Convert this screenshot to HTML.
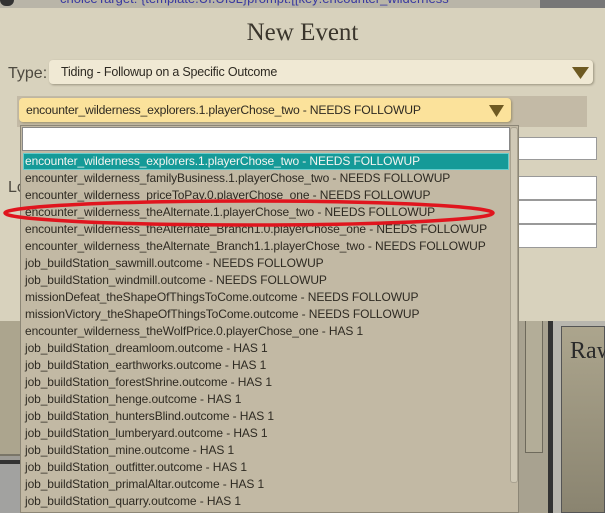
<!DOCTYPE html>
<html><head><style>
*{margin:0;padding:0;box-sizing:border-box}
body{width:605px;height:513px;overflow:hidden;position:relative;background:#9e9c96;font-family:"Liberation Sans",sans-serif}
.a{position:absolute}
.row{position:absolute;left:25px;font-size:12px;color:#2e2a22;white-space:nowrap;letter-spacing:-0.1px;height:17px;line-height:17px}
</style></head><body>
<div class="a" style="left:0;top:0;width:605px;height:8px;background:#b9b5a8"></div>
<div class="a" style="left:0;top:-9px;font-size:13px;color:#3a3aa0;left:60px;white-space:nowrap">choiceTarget: {template.UI.UI3L}prompt:[[key:encounter_wilderness</div>
<div class="a" style="left:540px;top:0;width:65px;height:8px;background:#777"></div>
<div class="a" style="left:0;top:0;width:14px;height:6px;background:#333;border-radius:0 0 6px 6px"></div>
<div class="a" style="left:0;top:321px;width:20px;height:135px;background:#aca58e;border-bottom:2px solid #7a7668"></div>
<div class="a" style="left:0;top:460px;width:20px;height:4px;background:#333"></div>
<div class="a" style="left:0;top:464px;width:20px;height:49px;background:#a2a2a0"></div>
<div class="a" style="left:518px;top:321px;width:32px;height:192px;background:#a8a290"></div>
<div class="a" style="left:525px;top:321px;width:18px;height:132px;border:1px solid #6e6a5c;border-top:none;background:#b3ad98"></div>
<div class="a" style="left:548px;top:321px;width:5px;height:192px;background:#333"></div>
<div class="a" style="left:553px;top:321px;width:52px;height:192px;background:#b8b6ae"></div>
<div class="a" style="left:561px;top:326px;width:44px;height:187px;background:linear-gradient(#aca58d,#8a8470);border:1px solid #555"></div>
<div class="a" style="left:570px;top:338px;font-family:'Liberation Serif',serif;font-size:24px;color:#2a2a2a">Raw</div>
<div class="a" style="left:0;top:8px;width:605px;height:313px;background:#d8d2bd"></div>
<div class="a" style="left:0;top:19px;width:605px;text-align:center;font-family:'Liberation Serif',serif;font-size:25px;color:#3a352c">New Event</div>
<div class="a" style="left:8px;top:65px;font-size:16px;color:#4e4a40">Type:</div>
<div class="a" style="left:49px;top:60px;width:544px;height:24px;background:#f0e9d4;border-radius:4px;box-shadow:1px 1px 2px #9a947f"></div>
<div class="a" style="left:61px;top:65px;font-size:12.5px;color:#2e2a22;letter-spacing:-0.2px">Tiding - Followup on a Specific Outcome</div>
<svg class="a" style="left:572px;top:66px" width="17" height="13"><path d="M0 1H17L8.5 13Z" fill="#6e5a22"/></svg>
<div class="a" style="left:8px;top:179px;font-size:16px;color:#4e4a40">Lo</div>
<div class="a" style="left:17px;top:96px;width:570px;height:31px;background:#c3baa6"></div>
<div class="a" style="left:19px;top:98px;width:492px;height:24px;background:#fbe29b;border-radius:4px;box-shadow:1px 1px 2px #9a8f6c"></div>
<div class="a" style="left:26px;top:103px;font-size:12.2px;color:#2e2a22;letter-spacing:-0.2px">encounter_wilderness_explorers.1.playerChose_two - NEEDS FOLLOWUP</div>
<svg class="a" style="left:489px;top:105px" width="15" height="12"><path d="M0 0H15L7.5 12Z" fill="#6e5a22"/></svg>
<div class="a" style="left:518px;top:137px;width:79px;height:23px;background:#fff;border:1px solid #999"></div>
<div class="a" style="left:518px;top:176px;width:79px;height:24px;background:#fff;border:1px solid #999"></div>
<div class="a" style="left:518px;top:200px;width:79px;height:24px;background:#fff;border:1px solid #999"></div>
<div class="a" style="left:518px;top:224px;width:79px;height:24px;background:#fff;border:1px solid #999"></div>
<div class="a" style="left:20px;top:125px;width:499px;height:388px;background:#c2b9a4;border:1px solid #8c8676"></div>
<div class="a" style="left:22px;top:127px;width:488px;height:24px;background:#fff;border:1px solid #888"></div>
<div class="a" style="left:510px;top:127px;width:8px;height:356px;background:#d0c9b6;border:1px solid #a9a290;border-radius:3px"></div>
<div class="a" style="left:23px;top:153px;width:486px;height:17px;background:#159a98;border:1px solid #6cc"></div>
<div class="row" style="top:153px;color:#f4f4f0">encounter_wilderness_explorers.1.playerChose_two - NEEDS FOLLOWUP</div>
<div class="row" style="top:170px">encounter_wilderness_familyBusiness.1.playerChose_two - NEEDS FOLLOWUP</div>
<div class="row" style="top:187px">encounter_wilderness_priceToPay.0.playerChose_one - NEEDS FOLLOWUP</div>
<div class="row" style="top:204px">encounter_wilderness_theAlternate.1.playerChose_two - NEEDS FOLLOWUP</div>
<div class="row" style="top:221px">encounter_wilderness_theAlternate_Branch1.0.playerChose_one - NEEDS FOLLOWUP</div>
<div class="row" style="top:238px">encounter_wilderness_theAlternate_Branch1.1.playerChose_two - NEEDS FOLLOWUP</div>
<div class="row" style="top:255px">job_buildStation_sawmill.outcome - NEEDS FOLLOWUP</div>
<div class="row" style="top:272px">job_buildStation_windmill.outcome - NEEDS FOLLOWUP</div>
<div class="row" style="top:289px">missionDefeat_theShapeOfThingsToCome.outcome - NEEDS FOLLOWUP</div>
<div class="row" style="top:306px">missionVictory_theShapeOfThingsToCome.outcome - NEEDS FOLLOWUP</div>
<div class="row" style="top:323px">encounter_wilderness_theWolfPrice.0.playerChose_one - HAS 1</div>
<div class="row" style="top:340px">job_buildStation_dreamloom.outcome - HAS 1</div>
<div class="row" style="top:357px">job_buildStation_earthworks.outcome - HAS 1</div>
<div class="row" style="top:374px">job_buildStation_forestShrine.outcome - HAS 1</div>
<div class="row" style="top:391px">job_buildStation_henge.outcome - HAS 1</div>
<div class="row" style="top:408px">job_buildStation_huntersBlind.outcome - HAS 1</div>
<div class="row" style="top:425px">job_buildStation_lumberyard.outcome - HAS 1</div>
<div class="row" style="top:442px">job_buildStation_mine.outcome - HAS 1</div>
<div class="row" style="top:459px">job_buildStation_outfitter.outcome - HAS 1</div>
<div class="row" style="top:476px">job_buildStation_primalAltar.outcome - HAS 1</div>
<div class="row" style="top:493px">job_buildStation_quarry.outcome - HAS 1</div>
<svg class="a" style="left:0;top:196px" width="500" height="36"><ellipse cx="249" cy="17" rx="244" ry="12" fill="none" stroke="#e0151e" stroke-width="3.5"/></svg>
</body></html>
